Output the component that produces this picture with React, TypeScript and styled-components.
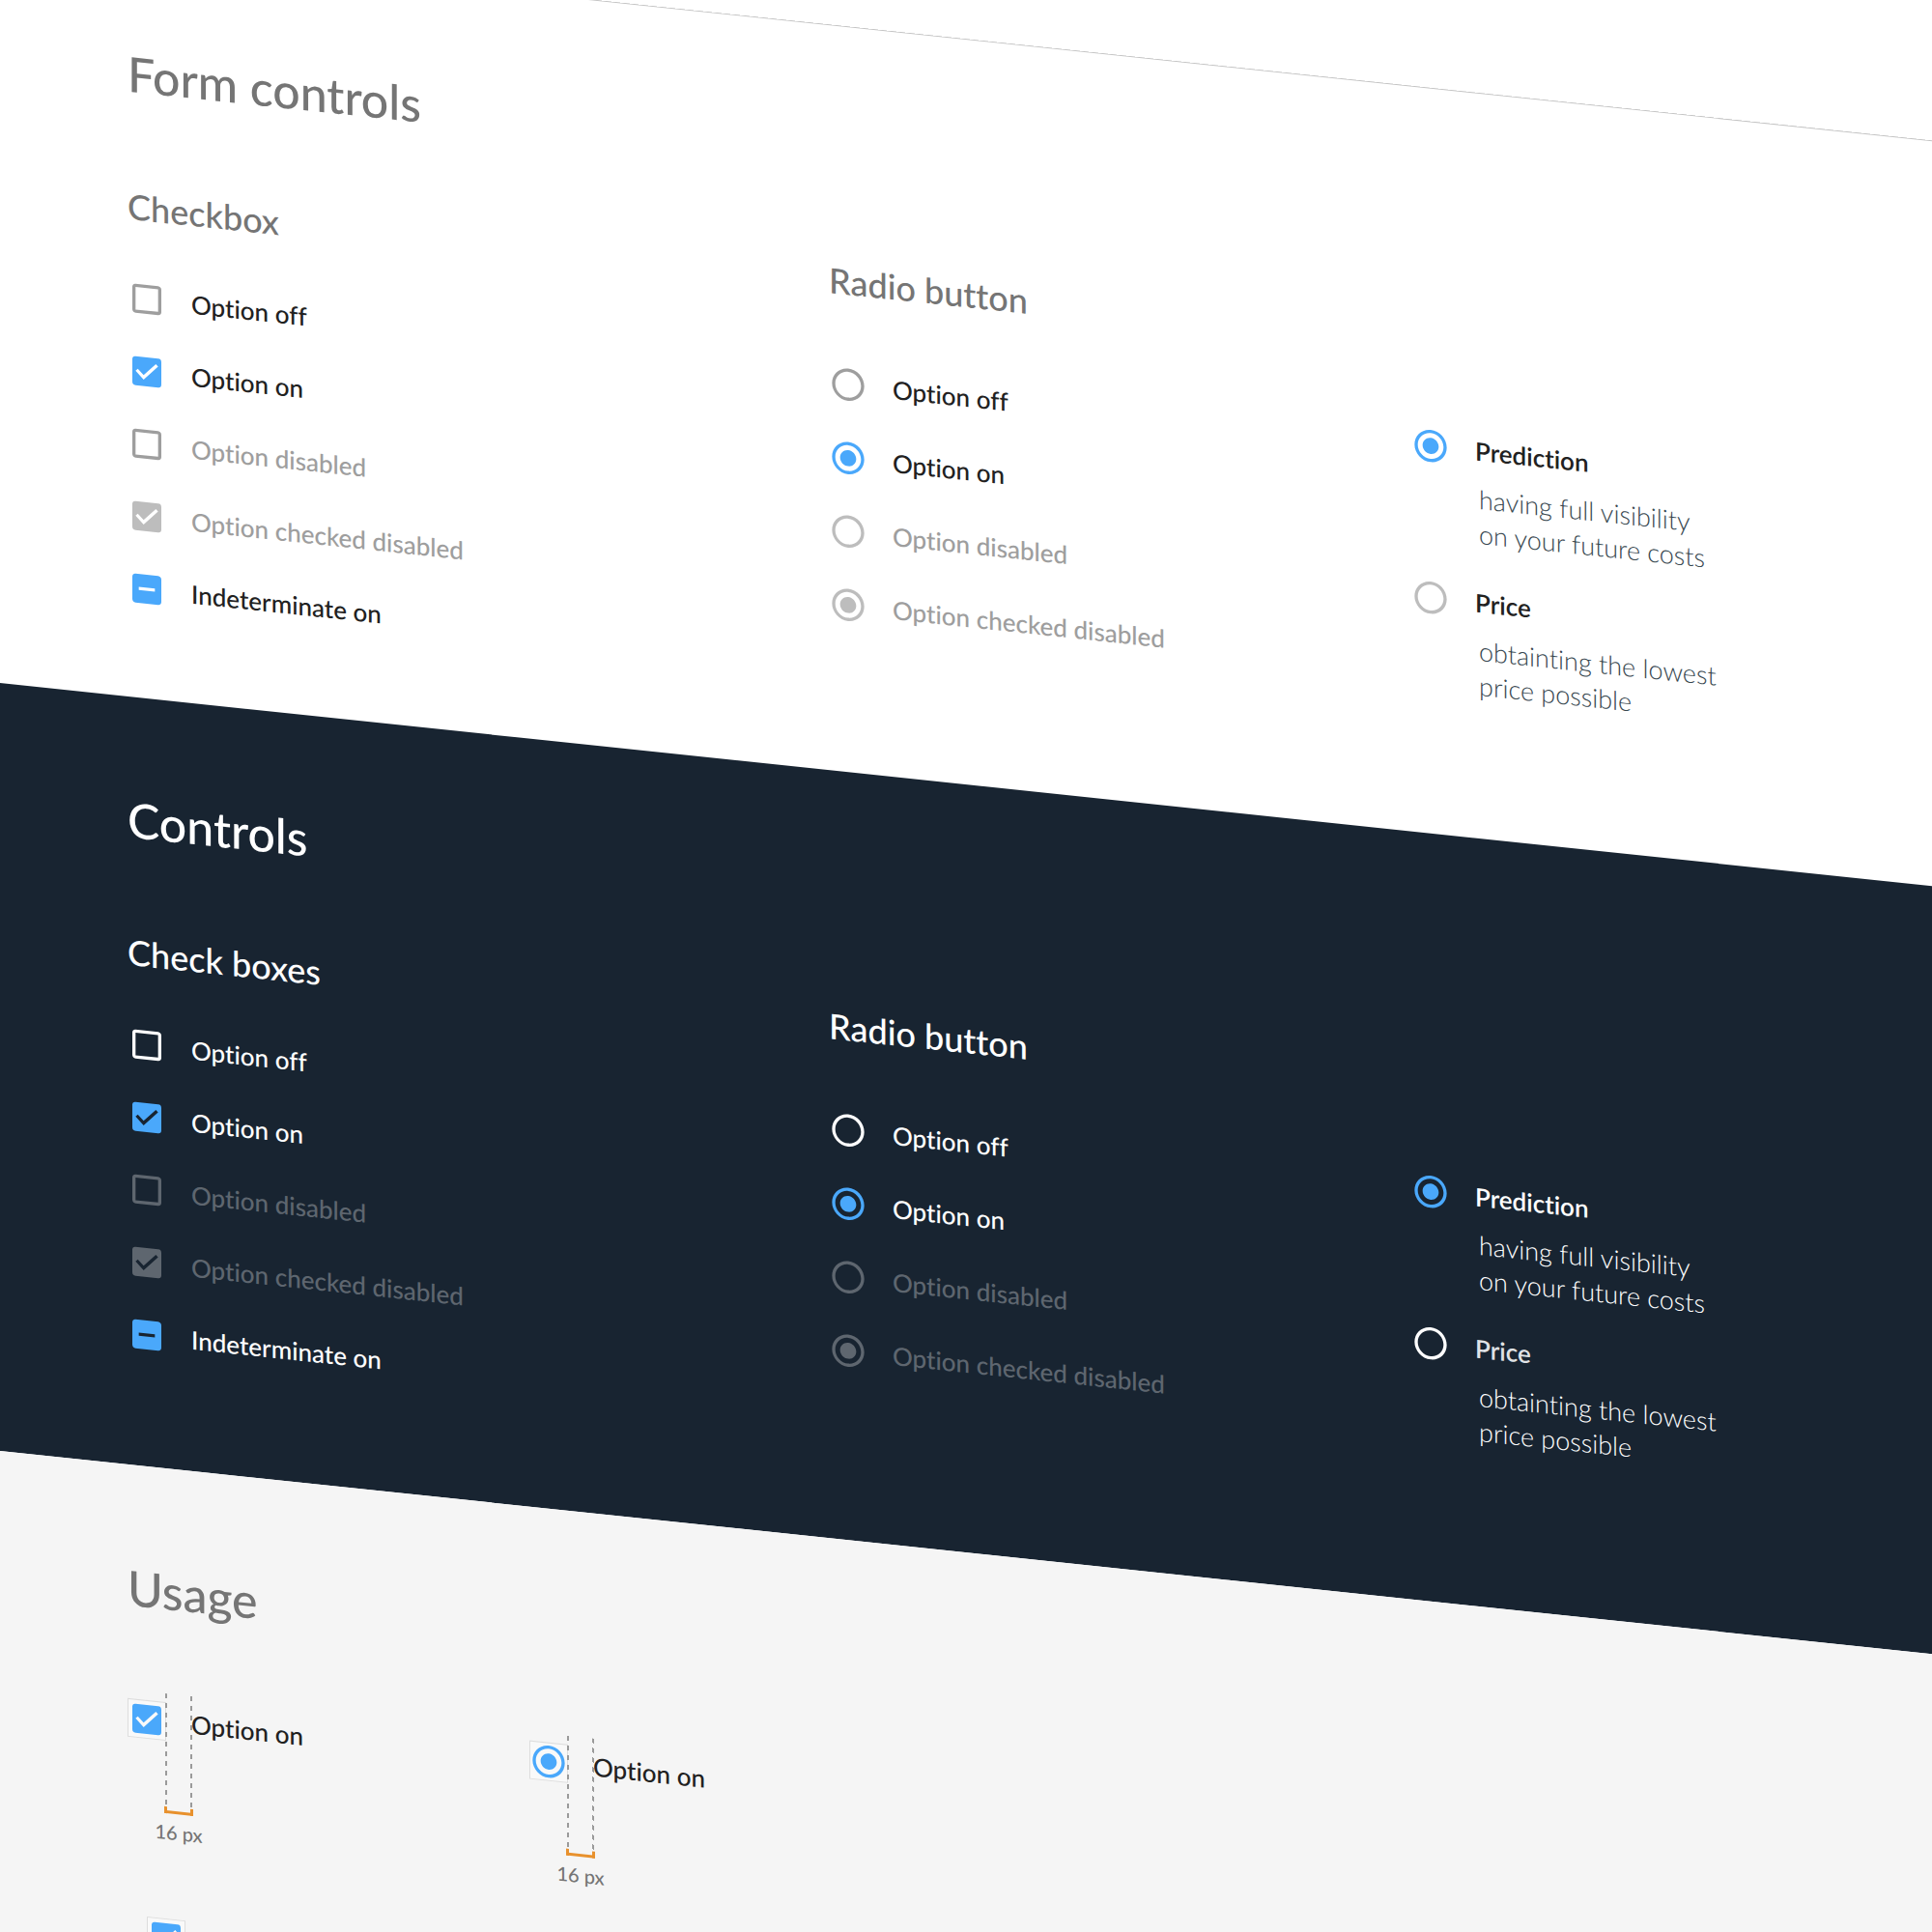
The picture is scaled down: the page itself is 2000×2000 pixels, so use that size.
import React, { useEffect, useId, useRef } from "react";
import styled, { createGlobalStyle, css, ThemeProvider } from "styled-components";
import {
  MdCheckBox,
  MdCheckBoxOutlineBlank,
  MdIndeterminateCheckBox,
  MdRadioButtonChecked,
  MdRadioButtonUnchecked,
} from "react-icons/md";

const light = {
  page: "#ffffff",
  title: "#757575",
  label: "#212121",
  mutedLabel: "#212121",
  disabledLabel: "#9e9e9e",
  body: "#37474f",
  box: "#9e9e9e",
  disabledBox: "#9e9e9e",
  ring: "#9e9e9e",
  softRing: "#bdbdbd",
  disabled: "#bdbdbd",
  accent: "#4aa8fb",
};

const dark = {
  page: "#182431",
  title: "#ffffff",
  label: "#ffffff",
  mutedLabel: "#e0e3e6",
  disabledLabel: "#5e666f",
  body: "#ffffff",
  box: "#ffffff",
  disabledBox: "#5e666f",
  ring: "#ffffff",
  softRing: "#ffffff",
  disabled: "#5e666f",
  accent: "#4aa8fb",
};

const usage = { ...light, page: "#f5f5f5" };

const GlobalStyle = createGlobalStyle`
  *, *::before, *::after { box-sizing: border-box; }
  body { margin: 0; background: #ffffff; }
`;

const Viewport = styled.main`
  height: 100vh;
  overflow: hidden;
  background: ${light.page};
  font-family: Lato, "Liberation Sans", sans-serif;
  font-variant-ligatures: none;
`;

const Sheet = styled.div`
  display: flex;
  flex-direction: column;
  min-height: 100vh;
  margin-top: -65px;
  transform: skewY(6deg);
  transform-origin: 0 65px;
`;

const Section = styled.section<{ $end: number; $ruled?: boolean; $grow?: boolean }>`
  padding: 97px 131px ${(p) => p.$end}px 132px;
  background: ${(p) => p.theme.page};
  box-shadow: ${(p) => (p.$ruled ? "inset 0 1px 0 #c4c4c4" : "none")};
  flex: ${(p) => (p.$grow ? "1 0 auto" : "none")};
`;

const Title = styled.h1`
  margin: 0 0 85px;
  font-size: 50px;
  line-height: 60px;
  font-weight: 500;
  color: ${(p) => p.theme.title};
`;

const Columns = styled.div`
  display: grid;
  grid-template-columns: 726fr 603fr 408fr;
  align-items: start;
`;

const Group = styled.div<{ $gap: number; $offset?: boolean }>`
  display: flex;
  flex-direction: column;
  align-items: flex-start;
  gap: ${(p) => p.$gap}px;
  padding-top: ${(p) => (p.$offset ? 109 : 0)}px;
`;

const Subtitle = styled.h2<{ $space: number }>`
  margin: 0 0 ${(p) => p.$space}px;
  font-size: 36px;
  line-height: 44px;
  font-weight: 500;
  color: ${(p) => p.theme.title};
`;

const Option = styled.label`
  display: flex;
  align-items: center;
  gap: 26px;
`;

const OptionText = styled.span<{ $disabled?: boolean; $muted?: boolean; $strong?: boolean }>`
  font-size: 26px;
  line-height: 36px;
  font-weight: ${(p) => (p.$strong ? 600 : 500)};
  white-space: nowrap;
  color: ${(p) =>
    p.$disabled ? p.theme.disabledLabel : p.$muted ? p.theme.mutedLabel : p.theme.label};
`;

const Detail = styled.p`
  margin: 12px 0 0;
  padding-left: 70px;
  font-size: 27px;
  line-height: 36px;
  font-weight: 300;
  color: ${(p) => p.theme.body};
`;

const Mark = styled.span<{ $framed?: boolean }>`
  display: grid;
  flex: none;
  width: 40px;
  height: 40px;
  ${(p) =>
    p.$framed &&
    css`
      background: #f9f9f9;
      outline: 1px solid #dddddd;
      outline-offset: -1px;
    `}

  > * {
    grid-area: 1 / 1;
    width: 40px;
    height: 40px;
    margin: 0;
  }

  svg {
    pointer-events: none;
  }
`;

type Tone = "box" | "ring" | "softRing";

const Control = styled.input<{ $tone: Tone }>`
  appearance: none;
  cursor: pointer;

  & ~ .off { color: ${(p) => p.theme[p.$tone]}; }
  & ~ .on, & ~ .mixed { display: none; color: ${(p) => p.theme.accent}; }

  &:checked ~ .on { display: block; }
  &:checked ~ .off { display: none; }

  &:disabled { cursor: default; }
  &:disabled ~ .on { color: ${(p) => p.theme.disabled}; }
`;

const BoxControl = styled(Control)`
  &:indeterminate ~ .mixed { display: block; }
  &:indeterminate ~ .off, &:indeterminate ~ .on { display: none; }
  &:disabled ~ .off { color: ${(p) => p.theme.disabledBox}; }
`;

const RadioControl = styled(Control)`
  &:disabled ~ .off { color: ${(p) => p.theme.disabled}; }
`;

interface MarkProps {
  id?: string;
  checked?: boolean;
  disabled?: boolean;
  framed?: boolean;
  name?: string;
  label?: string;
}

function CheckMark({ id, checked, disabled, framed, label, mixed }: MarkProps & { mixed?: boolean }) {
  const ref = useRef<HTMLInputElement>(null);
  useEffect(() => {
    if (ref.current) ref.current.indeterminate = !!mixed;
  }, [mixed]);
  return (
    <Mark $framed={framed}>
      <BoxControl
        ref={ref}
        id={id}
        type="checkbox"
        $tone="box"
        defaultChecked={checked}
        disabled={disabled}
        aria-label={label}
      />
      <MdCheckBoxOutlineBlank className="off" aria-hidden />
      <MdCheckBox className="on" aria-hidden />
      <MdIndeterminateCheckBox className="mixed" aria-hidden />
    </Mark>
  );
}

function RadioMark({ id, checked, disabled, framed, name, soft }: MarkProps & { soft?: boolean }) {
  return (
    <Mark $framed={framed}>
      <RadioControl
        id={id}
        type="radio"
        name={name}
        $tone={soft ? "softRing" : "ring"}
        defaultChecked={checked}
        disabled={disabled}
      />
      <MdRadioButtonUnchecked className="off" aria-hidden />
      <MdRadioButtonChecked className="on" aria-hidden />
    </Mark>
  );
}

function CheckOption({ text, ...rest }: { text: string; checked?: boolean; disabled?: boolean; mixed?: boolean }) {
  const id = useId();
  return (
    <Option htmlFor={id}>
      <CheckMark id={id} {...rest} />
      <OptionText $disabled={rest.disabled}>{text}</OptionText>
    </Option>
  );
}

function RadioOption({ text, name, ...rest }: { text: string; name: string; checked?: boolean; disabled?: boolean }) {
  const id = useId();
  return (
    <Option htmlFor={id}>
      <RadioMark id={id} name={name} {...rest} />
      <OptionText $disabled={rest.disabled}>{text}</OptionText>
    </Option>
  );
}

function Choice({ title, lines, name, checked }: { title: string; lines: string[]; name: string; checked?: boolean }) {
  const id = useId();
  return (
    <div>
      <Option htmlFor={id}>
        <RadioMark id={id} name={name} checked={checked} soft />
        <OptionText $strong $muted={!checked}>{title}</OptionText>
      </Option>
      <Detail>
        {lines[0]}
        <br />
        {lines[1]}
      </Detail>
    </div>
  );
}

function Showcase({ title, checkTitle, prefix }: { title: string; checkTitle: string; prefix: string }) {
  return (
    <>
      <Title>{title}</Title>
      <Columns>
        <div>
          <Subtitle $space={53}>{checkTitle}</Subtitle>
          <Group $gap={35}>
            <CheckOption text="Option off" />
            <CheckOption text="Option on" checked />
            <CheckOption text="Option disabled" disabled />
            <CheckOption text="Option checked disabled" checked disabled />
            <CheckOption text="Indeterminate on" mixed />
          </Group>
        </div>
        <div>
          <Subtitle $space={65}>Radio button</Subtitle>
          <Group $gap={36}>
            <RadioOption name={`${prefix}-radio`} text="Option off" />
            <RadioOption name={`${prefix}-radio`} text="Option on" checked />
            <RadioOption name={`${prefix}-radio-disabled`} text="Option disabled" disabled />
            <RadioOption name={`${prefix}-radio-disabled`} text="Option checked disabled" checked disabled />
          </Group>
        </div>
        <Group $gap={33} $offset>
          <Choice
            name={`${prefix}-goal`}
            title="Prediction"
            lines={["having full visibility", "on your future costs"]}
            checked
          />
          <Choice
            name={`${prefix}-goal`}
            title="Price"
            lines={["obtainting the lowest", "price possible"]}
          />
        </Group>
      </Columns>
    </>
  );
}

const SampleRow = styled.div<{ $inset?: boolean }>`
  display: grid;
  grid-auto-flow: column;
  grid-auto-columns: 416px;
  padding-left: ${(p) => (p.$inset ? 20 : 0)}px;
  margin-bottom: 77px;
`;

const Sample = styled.div`
  position: relative;
  padding-bottom: 107px;
`;

/* Spacing guide laid over the gap between a control and its label. */
const Guide = styled.div`
  position: absolute;
  top: -9px;
  left: 40px;
  width: 26px;
  display: flex;
  flex-direction: column;
  align-items: center;
  pointer-events: none;
`;

const dash = "repeating-linear-gradient(to bottom, #9a9a9a 0 5px, transparent 5px 10px)";

const DashedLines = styled.div`
  width: 28px;
  height: 117px;
  background: ${dash} left / 2px 100% no-repeat, ${dash} right / 2px 100% no-repeat;
`;

const Bracket = styled.div`
  width: 30px;
  height: 7px;
  border: solid #e8912d;
  border-width: 0 3px 3px;
`;

const Measure = styled.span`
  margin-top: 7px;
  font-size: 20px;
  line-height: 24px;
  font-weight: 500;
  white-space: nowrap;
  color: #757575;
`;

function GapGuide() {
  return (
    <Guide>
      <DashedLines />
      <Bracket />
      <Measure>16 px</Measure>
    </Guide>
  );
}

export default function App() {
  const checkId = useId();
  const radioId = useId();
  return (
    <>
      <GlobalStyle />
      <Viewport>
        <Sheet>
          <ThemeProvider theme={light}>
            <Section $end={93} $ruled>
              <Showcase title="Form controls" checkTitle="Checkbox" prefix="light" />
            </Section>
          </ThemeProvider>
          <ThemeProvider theme={dark}>
            <Section $end={116}>
              <Showcase title="Controls" checkTitle="Check boxes" prefix="dark" />
            </Section>
          </ThemeProvider>
          <ThemeProvider theme={usage}>
            <Section $end={97} $grow>
              <Title>Usage</Title>
              <SampleRow>
                <Sample>
                  <Option htmlFor={checkId}>
                    <CheckMark id={checkId} checked framed />
                    <OptionText>Option on</OptionText>
                  </Option>
                  <GapGuide />
                </Sample>
                <Sample>
                  <Option htmlFor={radioId}>
                    <RadioMark id={radioId} name="usage" checked framed />
                    <OptionText>Option on</OptionText>
                  </Option>
                  <GapGuide />
                </Sample>
              </SampleRow>
              <SampleRow $inset>
                <CheckMark checked framed label="Option on" />
              </SampleRow>
            </Section>
          </ThemeProvider>
        </Sheet>
      </Viewport>
    </>
  );
}
